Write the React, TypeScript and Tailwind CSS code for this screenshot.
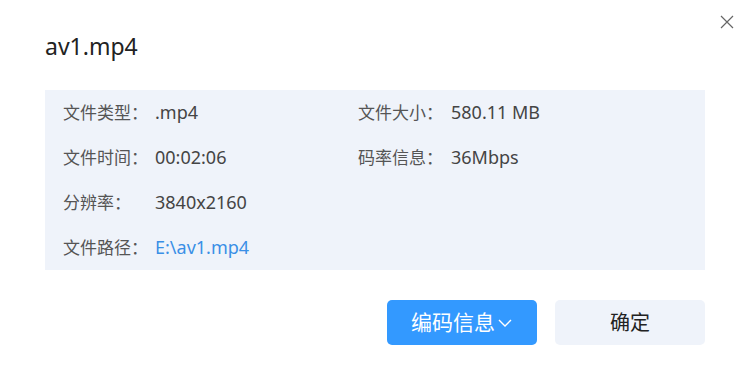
import React from 'react';

const rows: { label: string; value: string; link?: boolean; label2?: string; value2?: string }[] = [
  { label: '文件类型：', value: '.mp4', label2: '文件大小：', value2: '580.11 MB' },
  { label: '文件时间：', value: '00:02:06', label2: '码率信息：', value2: '36Mbps' },
  { label: '分辨率：', value: '3840x2160' },
  { label: '文件路径：', value: 'E:\\av1.mp4', link: true },
];

export default function App() {
  return (
    <div
      className="w-[750px] h-[390px] bg-white relative"
      style={{ fontFamily: '"Noto Sans", "Noto Sans CJK SC", sans-serif' }}
    >
      {/* close */}
      <button className="absolute right-[16px] top-[15px] w-[14px] h-[14px] text-[#666]">
        <svg viewBox="0 0 14 14" className="w-[14px] h-[14px]" fill="none" stroke="currentColor" strokeWidth="1.2">
          <path d="M1 1L13 13M13 1L1 13" />
        </svg>
      </button>

      <div className="px-[45px] pt-[30px]">
        <h1 className="text-[23px] leading-[32px] text-[#222]">av1.mp4</h1>

        <div className="mt-[28px] bg-[#eff3fa] px-[18px] h-[180px] flex flex-col">
          {rows.map((r) => (
            <div key={r.label} className="h-[45px] flex items-center text-[17px] text-[#555]">
              <div className="w-[295px] flex items-center">
                <span className="w-[92px] shrink-0">{r.label}</span>
                <span className={r.link ? 'text-[18px] text-[#3a8fe6]' : 'text-[18px] text-[#444]'}>{r.value}</span>
              </div>
              {r.label2 && (
                <div className="flex items-center">
                  <span className="w-[93px] shrink-0">{r.label2}</span>
                  <span className="text-[18px] text-[#444]">{r.value2}</span>
                </div>
              )}
            </div>
          ))}
        </div>

        <div className="mt-[30px] flex justify-end gap-[18px]">
          <button className="w-[150px] h-[45px] rounded-[5px] bg-[#3399ff] text-white text-[21px] flex items-center justify-center gap-[2px]">
            <span>编码信息</span>
            <svg viewBox="0 0 16 16" className="w-[16px] h-[16px]" fill="none" stroke="currentColor" strokeWidth="1.4">
              <path d="M2 5L8 11L14 5" />
            </svg>
          </button>
          <button className="w-[150px] h-[45px] rounded-[5px] bg-[#eff3fa] text-[#222] text-[20px] flex items-center justify-center">
            确定
          </button>
        </div>
      </div>
    </div>
  );
}
